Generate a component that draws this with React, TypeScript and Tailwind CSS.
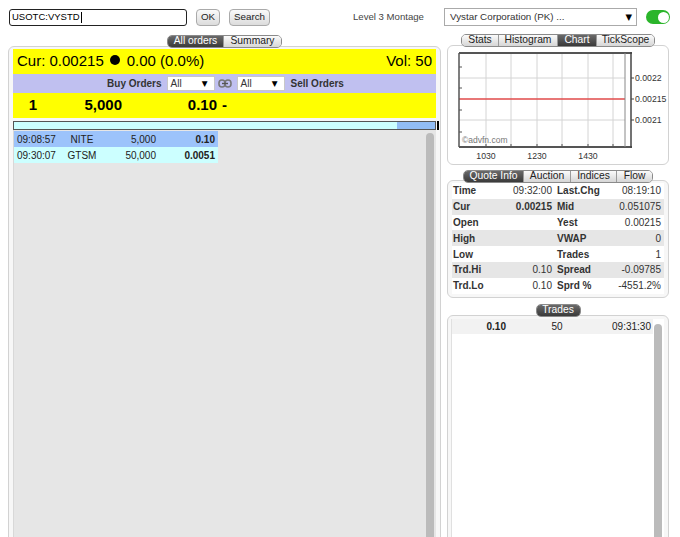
import React from "react";

const font = "font-['Liberation_Sans',Arial,'DejaVu_Sans',sans-serif]";

type Tab = { label: string; w: string; active?: boolean };

function TabStrip({ tabs, h }: { tabs: Tab[]; h: string }) {
  return (
    <div className={`relative z-10 mx-auto flex ${h} overflow-hidden rounded-[5px] border border-[#8a8a8a]`}>
      {tabs.map((t) => (
        <div
          key={t.label}
          className={`${t.w} flex items-center justify-center border-r border-[#9a9a9a] text-[10.3px] leading-none last:border-r-0 ${
            t.active
              ? "bg-linear-to-b from-[#6a6a6a] to-[#3a3a3a] text-white"
              : "bg-linear-to-b from-[#fbfbfb] to-[#d6d6d6] text-[#222]"
          }`}
        >
          {t.label}
        </div>
      ))}
    </div>
  );
}

function MiniSelect() {
  return (
    <div className="flex h-[15px] w-[48px] items-center justify-between border border-[#c8c8c8] bg-white pl-[3px] pr-[6px] text-[10px] text-[#333]">
      <span>All</span>
      <span className="font-['DejaVu_Sans'] text-[7.5px] text-black">▼</span>
    </div>
  );
}

function LinkIcon() {
  return (
    <svg width="14" height="11" viewBox="0 0 14 11">
      <rect x="1" y="2" width="6" height="7" rx="3" fill="none" stroke="#777" strokeWidth="1.6" />
      <rect x="7" y="2" width="6" height="7" rx="3" fill="none" stroke="#777" strokeWidth="1.6" />
      <line x1="4" y1="5.5" x2="10" y2="5.5" stroke="#555" strokeWidth="1.4" />
    </svg>
  );
}

function Chart() {
  const vx = [38, 63, 89, 114, 140, 165];
  return (
    <svg width="220" height="118" viewBox="0 0 220 118">
      <rect x="11" y="7" width="172" height="94" fill="#fff" />
      {vx.map((x) => (
        <line key={x} x1={x} y1="7" x2={x} y2="101" stroke="#d4d4d4" strokeWidth="1" />
      ))}
      {[32, 74].map((y) => (
        <line key={y} x1="11" y1={y} x2="177" y2={y} stroke="#d4d4d4" strokeWidth="1" />
      ))}
      <line x1="11" y1="53" x2="177" y2="53" stroke="#e04a4a" strokeWidth="1.3" />
      <line x1="11" y1="7" x2="184" y2="7" stroke="#555" strokeWidth="2" />
      <line x1="11" y1="101" x2="184" y2="101" stroke="#555" strokeWidth="2" />
      <line x1="11" y1="7" x2="11" y2="101" stroke="#555" strokeWidth="1.5" />
      <line x1="177" y1="7" x2="177" y2="101" stroke="#888" strokeWidth="1" />
      <line x1="183" y1="6" x2="183" y2="102" stroke="#444" strokeWidth="1.5" />
      {[21, 42, 64, 86].map((y) => (
        <line key={y} x1="11" y1={y} x2="14" y2={y} stroke="#555" strokeWidth="1" />
      ))}
      {vx.map((x) => (
        <line key={"b" + x} x1={x} y1="101" x2={x} y2="98" stroke="#555" strokeWidth="1" />
      ))}
      {[32, 53, 74].map((y) => (
        <line key={"r" + y} x1="183" y1={y} x2="186" y2={y} stroke="#444" strokeWidth="1" />
      ))}
      <g fontFamily="Liberation Sans, Arial, sans-serif" fontSize="8.7" fill="#333">
        <text x="187" y="35">0.0022</text>
        <text x="187" y="56">0.00215</text>
        <text x="187" y="77">0.0021</text>
        <text x="38" y="113" textAnchor="middle">1030</text>
        <text x="89" y="113" textAnchor="middle">1230</text>
        <text x="140" y="113" textAnchor="middle">1430</text>
      </g>
      <text x="14" y="97" fontFamily="Liberation Sans, Arial, sans-serif" fontSize="8.5" fill="#777">
        ©advfn.com
      </text>
    </svg>
  );
}

const quoteRows = [
  ["Time", "09:32:00", "Last.Chg", "08:19:10"],
  ["Cur", "0.00215", "Mid", "0.051075"],
  ["Open", "", "Yest", "0.00215"],
  ["High", "", "VWAP", "0"],
  ["Low", "", "Trades", "1"],
  ["Trd.Hi", "0.10", "Spread", "-0.09785"],
  ["Trd.Lo", "0.10", "Sprd %", "-4551.2%"],
];

const orders = [
  { time: "09:08:57", mm: "NITE", size: "5,000", price: "0.10", bg: "bg-[#9cc3fb]" },
  { time: "09:30:07", mm: "GTSM", size: "50,000", price: "0.0051", bg: "bg-[#ccffff]" },
];

export default function App() {
  return (
    <div className={`${font} h-[537px] w-[680px] overflow-hidden bg-white text-[10px] text-[#222]`}>
      {/* top bar */}
      <div className="flex h-[33px] items-center pl-[9px] pt-[1px]">
        <div className="flex h-[17px] w-[178px] items-center rounded-[3px] border-[1.5px] border-[#222] pl-[2px] text-[9.5px] text-black">
          USOTC:VYSTD<span className="ml-[1px] h-[11px] w-px bg-black" />
        </div>
        <div className="ml-[9px] flex h-[17px] w-[24px] items-center justify-center rounded-[4px] border border-[#aaa] bg-linear-to-b from-[#fafafa] to-[#dcdcdc] text-[9.8px]">
          OK
        </div>
        <div className="ml-[9px] flex h-[17px] w-[41px] items-center justify-center rounded-[4px] border border-[#aaa] bg-linear-to-b from-[#fafafa] to-[#dcdcdc] text-[9.8px]">
          Search
        </div>
        <span className="ml-[83px] w-[72px] text-[9.6px] text-[#444]">Level 3 Montage</span>
        <div className="ml-[19px] flex h-[18px] w-[193px] items-center justify-between border border-[#aaa] pl-[5px] pr-[4px] text-[9.8px] text-[#333]">
          <span>Vystar Corporation (PK) ...</span>
          <span className="font-['DejaVu_Sans'] text-[8.5px] text-black">▼</span>
        </div>
        <div className="ml-[9px] flex h-[14px] w-[24px] items-center justify-end rounded-full bg-[#2bb52b] pr-[1.5px]">
          <div className="h-[11px] w-[11px] rounded-full bg-white" />
        </div>
      </div>

      <div className="flex">
        {/* left column */}
        <div className="ml-[8px] mt-[2px] flex w-[433px] flex-col">
          <div className="-mb-[2px] flex">
            <TabStrip
              h="h-[13px]"
              tabs={[
                { label: "All orders", w: "w-[56px]", active: true },
                { label: "Summary", w: "w-[57px]" },
              ]}
            />
          </div>
          <div className="h-[500px] rounded-[6px] border border-[#d2d2d2] bg-[#f7f7f7] px-[4px] pt-[2px]">
            <div className="bg-[#ffff00]">
              <div className="flex h-[25px] items-center pl-[4px] pr-[4px] text-[15px] text-black">
                <span>Cur: 0.00215</span>
                <span className="ml-[6px] h-[10px] w-[10px] -translate-y-[2px] rounded-full bg-black" />
                <span className="ml-[7px]">0.00 (0.0%)</span>
                <span className="ml-auto">Vol: 50</span>
              </div>
              <div className="flex h-[19px] items-center justify-center bg-[#c0c0f0] pl-[2px]">
                <span className="text-[10px] font-bold text-[#333]">Buy Orders</span>
                <div className="ml-[5px]">
                  <MiniSelect />
                </div>
                <div className="ml-[3px] flex items-center">
                  <LinkIcon />
                </div>
                <div className="ml-[5px]">
                  <MiniSelect />
                </div>
                <span className="ml-[6px] text-[10px] font-bold text-[#333]">Sell Orders</span>
              </div>
              <div className="flex h-[25px] items-center text-[15px] font-bold text-black">
                <span className="w-[40px] text-center">1</span>
                <span className="w-[69px] text-right">5,000</span>
                <span className="w-[95px] text-right">0.10</span>
                <span className="ml-[5px]">-</span>
              </div>
            </div>
            <div className="mt-[3px] -mr-[4px] flex">
              <div className="flex h-[9px] w-[423px] border-[1.5px] border-[#555] bg-[#ccffff]">
                <div className="flex-1" />
                <div className="w-[38px] bg-[#92bdf5]" />
              </div>
              <div className="ml-[1px] h-[9px] w-[2px] bg-black" />
            </div>
            <div className="relative h-[420px] border-l border-[#d8d8d8] bg-[#e6e6e6] pt-px">
              {orders.map((o) => (
                <div key={o.time} className={`flex h-[16px] w-[204px] items-center ${o.bg} text-[10px] text-[#222]`}>
                  <span className="w-[47px] pl-[3px]">{o.time}</span>
                  <span className="w-[42px] text-center">{o.mm}</span>
                  <span className="w-[53px] text-right">{o.size}</span>
                  <span className="w-[59px] text-right font-bold">{o.price}</span>
                </div>
              ))}
              <div className="absolute right-[2px] top-[3px] h-[420px] w-[8px] rounded-[4px] bg-[#bbbbbb]" />
            </div>
          </div>
        </div>

        {/* right column */}
        <div className="ml-[6px] flex w-[222px] flex-col">
          <div className="mt-[1px] -mb-[2px] flex">
            <TabStrip
              h="h-[13px]"
              tabs={[
                { label: "Stats", w: "w-[37px]" },
                { label: "Histogram", w: "w-[59px]" },
                { label: "Chart", w: "w-[39px]", active: true },
                { label: "TickScope", w: "w-[57px]" },
              ]}
            />
          </div>
          <div className="h-[120px] rounded-[6px] border border-[#d2d2d2] bg-white">
            <Chart />
          </div>

          <div className="mt-[5px] -mb-[3px] flex">
            <TabStrip
              h="h-[13px]"
              tabs={[
                { label: "Quote Info", w: "w-[60px]", active: true },
                { label: "Auction", w: "w-[47px]" },
                { label: "Indices", w: "w-[46px]" },
                { label: "Flow", w: "w-[35px]" },
              ]}
            />
          </div>
          <div className="h-[118px] rounded-[6px] border border-[#d2d2d2] bg-[#f7f7f7] px-[4px] pt-[2px]">
            {quoteRows.map((r, i) => (
              <div
                key={r[0]}
                className={`flex h-[15.8px] items-center text-[10px] ${i % 2 === 1 ? "bg-[#e6e6e6]" : "bg-white"}`}
              >
                <span className="w-[48px] pl-[1px] font-bold text-[#333]">{r[0]}</span>
                <span className={`w-[53px] pr-[1px] text-right text-[#333] ${r[0] === "Cur" ? "font-bold" : ""}`}>
                  {r[1]}
                </span>
                <span className="w-[52px] pl-[4px] font-bold text-[#333]">{r[2]}</span>
                <span className="w-[59px] pr-[3px] text-right text-[#333]">{r[3]}</span>
              </div>
            ))}
          </div>

          <div className="mt-[6px] -mb-[2px] flex">
            <TabStrip h="h-[13px]" tabs={[{ label: "Trades", w: "w-[43px]", active: true }]} />
          </div>
          <div className="h-[240px] rounded-[6px] border border-[#d2d2d2] bg-[#f7f7f7] pl-[3px] pr-[4px] pt-[3px]">
            <div className="relative h-[240px] border-l border-[#e0e0e0] bg-white">
              <div className="flex h-[15px] w-[201px] items-center bg-[#f2f2f2] text-[10px] text-[#222]">
                <span className="w-[54px] text-right font-bold">0.10</span>
                <span className="w-[102px] text-center">50</span>
                <span className="w-[43px] text-right">09:31:30</span>
              </div>
              <div className="absolute right-[2px] top-[5px] h-[240px] w-[8px] rounded-[4px] bg-[#bbbbbb]" />
            </div>
          </div>
        </div>
      </div>
    </div>
  );
}
